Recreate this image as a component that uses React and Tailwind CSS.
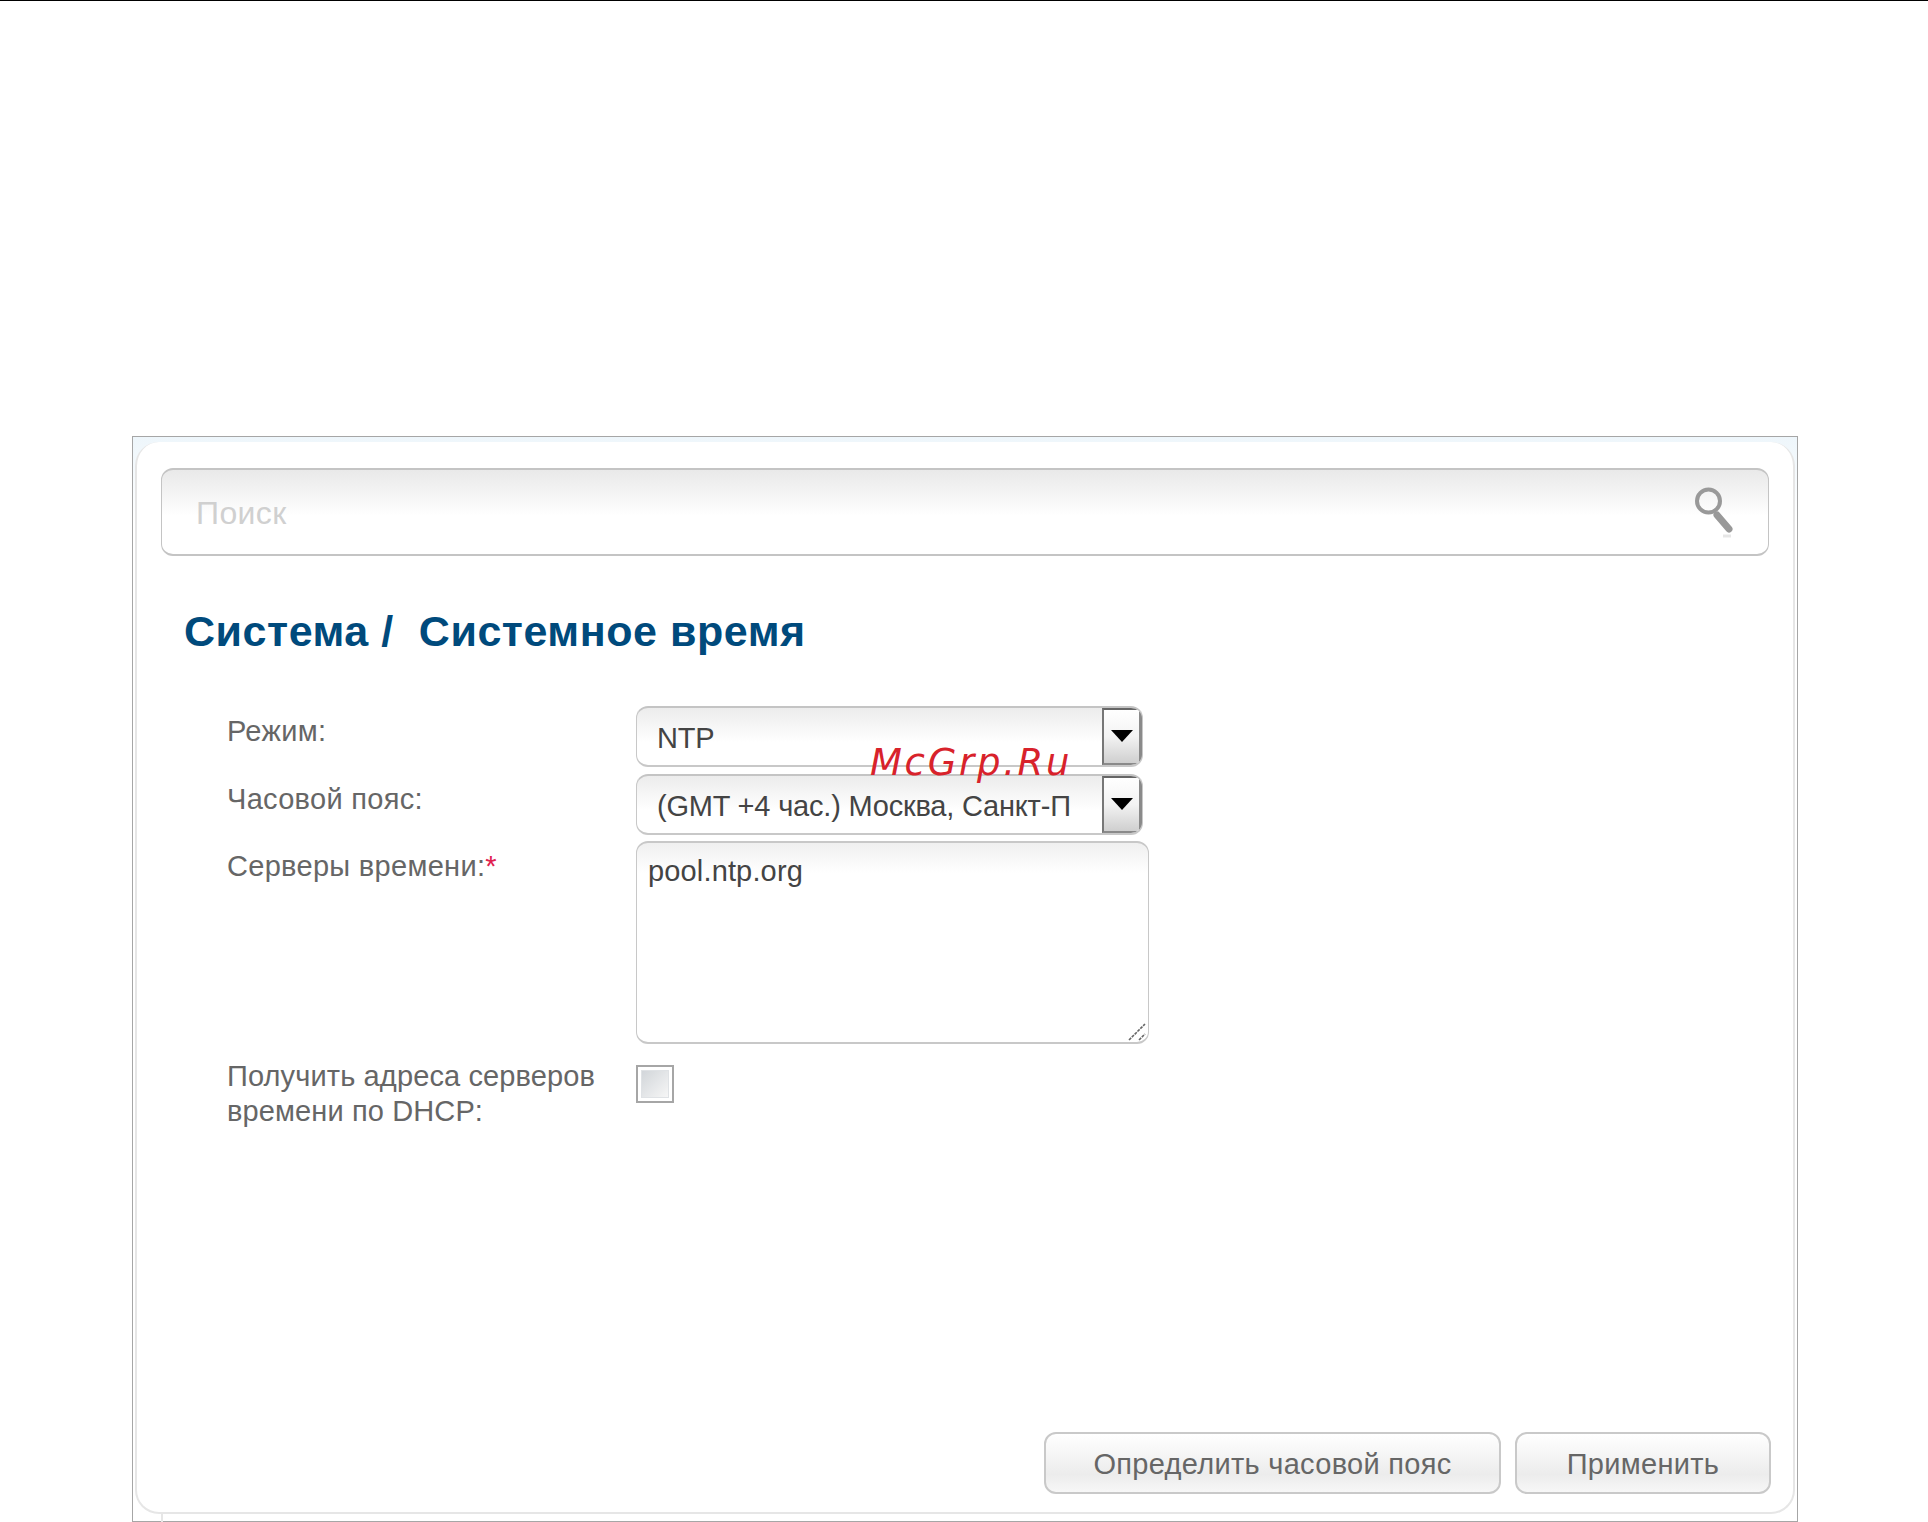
import React from "react";

const sans = "font-['Liberation_Sans',Arial,sans-serif]";

function Arrow() {
  return (
    <div className="absolute right-0 top-0 flex h-[57px] w-[40px] items-center justify-center border-2 border-r-[3px] border-[#8a8a8a] border-t-[#666] border-l-[#777] bg-gradient-to-b from-white via-[#f3f3f3] to-[#cfcfcf]">
      <div className="mb-[2px] h-0 w-0 border-x-[11px] border-t-[12px] border-x-transparent border-t-black" />
    </div>
  );
}

function SelectBox({ children }) {
  return (
    <div className="relative h-[61px] w-[507px] shrink-0 overflow-hidden rounded-[12px] border border-[#c8c8c8] border-t-2 border-b-2 border-t-[#c4c4c4] bg-gradient-to-b from-[#ececec] via-white via-60% to-white">
      <div className="h-full whitespace-nowrap pl-[20px] pt-[10px] text-[29px] leading-[40px] tracking-[-0.2px] text-[#444]">
        {children}
      </div>
      <Arrow />
    </div>
  );
}

function Label({ children, className = "" }) {
  return <div className={`w-[500px] shrink-0 pl-[91px] text-[29px] leading-[35px] text-[#666] ${className}`}>{children}</div>;
}

function Btn({ className, children }) {
  return (
    <button className={`h-[62px] rounded-[12px] border-2 border-[#c9c9c9] bg-gradient-to-b from-white via-[#ececec] via-70% to-[#f7f7f7] pt-[2px] text-[29px] leading-none tracking-[0.3px] text-[#666] ${className}`}>
      {children}
    </button>
  );
}

export default function App() {
  return (
    <div className={`relative h-[1522px] w-[1928px] overflow-hidden border-t border-black bg-white ${sans}`}>
      <div className="ml-[132px] mt-[435px] h-[1086px] w-[1666px] border border-[#a6a6a6] bg-gradient-to-b from-[#eef6fb] from-0% to-white to-8% pl-[2px] pr-[2px] pt-[5px]">
        <div className="flex h-[1072px] w-[1660px] flex-col rounded-[24px] border-x-2 border-b-2 border-[#e6e6e6] bg-white pl-[24px] pr-[22px] pt-[26px]">
          <div className="relative h-[88px] w-[1608px] rounded-[12px] border border-[#c4c4c4] border-t-2 border-b-2 bg-gradient-to-b from-[#e9e9e9] via-white via-55% to-white">
            <input
              readOnly
              placeholder="Поиск"
              className="h-full w-[1400px] bg-transparent pl-[34px] pt-[2px] text-[32px] tracking-[0.4px] text-[#ccc] outline-none placeholder:text-[#d0d0d0]"
            />
            <svg className="absolute right-[33px] top-[16px]" width="42" height="56" viewBox="0 0 42 56" fill="none">
              <circle cx="15.5" cy="15" r="11.5" stroke="#999" strokeWidth="4" />
              <path d="M24 29 L36 43" stroke="#999" strokeWidth="7" strokeLinecap="round" />
              <path d="M30 50 H38" stroke="#e6e6e6" strokeWidth="3" />
            </svg>
          </div>

          <h1 className="ml-[23px] mt-[52px] whitespace-pre text-[43px] font-bold leading-[46px] tracking-[0.55px] text-[#004a7c]">
            Система /  Системное время
          </h1>

          <div className="-ml-[25px] mt-[52px] flex flex-col">
            <div className="flex">
              <Label className="pt-[8px] tracking-[0.3px]">Режим:</Label>
              <SelectBox>NTP</SelectBox>
            </div>
            <div className="mt-[7px] flex">
              <Label className="pt-[8px] tracking-[0.3px]">Часовой пояс:</Label>
              <SelectBox>(GMT +4 час.) Москва, Санкт-П</SelectBox>
            </div>
            <div className="mt-[6px] flex">
              <Label className="pt-[8px] tracking-[0.3px]">
                Серверы времени:<span className="text-[#e0204f]">*</span>
              </Label>
              <div className="relative h-[203px] w-[513px]">
                <textarea
                  readOnly
                  defaultValue="pool.ntp.org"
                  className="h-full w-full resize-none rounded-[12px] border border-[#c8c8c8] border-t-2 border-b-2 bg-gradient-to-b from-[#f0f0f0] via-white via-15% to-white px-[11px] pt-[11px] text-[29px] leading-[35px] tracking-[0.15px] text-[#444] outline-none"
                />
                <svg className="absolute bottom-[3px] right-[3px]" width="18" height="18" viewBox="0 0 18 18" fill="none">
                  <path d="M1 17 L17 1 M11 17 L17 11" stroke="#666" strokeWidth="1.6" strokeDasharray="3 1" />
                </svg>
              </div>
            </div>
            <div className="mt-[15px] flex">
              <Label className="tracking-[0.12px]">
                Получить адреса серверов
                <br />
                времени по DHCP:
              </Label>
              <div className="mt-[6px] h-[38px] w-[38px] border-2 border-[#a6a6a6] p-[3px]">
                <div className="h-full w-full border border-[#dfe2e5] bg-gradient-to-br from-[#d2d6da] to-[#f6f6f6]" />
              </div>
            </div>
          </div>

          <div className="mb-[18px] mt-auto flex justify-end gap-[14px]">
            <Btn className="w-[457px]">Определить часовой пояс</Btn>
            <Btn className="w-[256px]">Применить</Btn>
          </div>
        </div>
      </div>
      <div className="absolute left-[161px] top-[1512px] h-[9px] w-[2px] bg-[#e6e6e6]" />
      <div className="absolute left-[870px] top-[740px] font-['DejaVu_Sans',sans-serif] text-[37px] italic leading-[44px] tracking-[2.7px] text-[#d8222b]">
        McGrp.Ru
      </div>
    </div>
  );
}
